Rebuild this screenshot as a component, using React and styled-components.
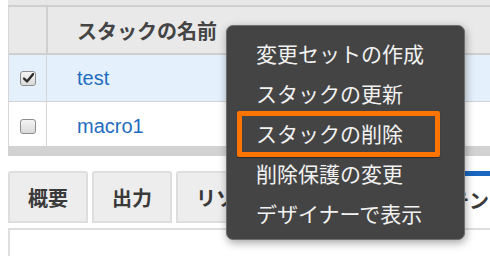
import React from "react";
import styled, { createGlobalStyle } from "styled-components";

const Global = createGlobalStyle`
  html, body { margin: 0; padding: 0; background: #fff; }
  body { font-family: "Liberation Sans", "Noto Sans CJK JP", sans-serif; }
`;

const Page = styled.div`
  position: relative;
  width: 490px;
  height: 256px;
  overflow: hidden;
  padding-left: 8px;
  box-sizing: border-box;
  background: #fff;
`;

const Wide = styled.div`
  width: 620px;
`;

const TopStrip = styled.div`
  height: 5px;
  background: #e7e7e7;
  border-bottom: 2px solid #cfcfcf;
`;

const Table = styled.div`
  border-left: 1px solid #d6d6d6;
`;

const Row = styled.div`
  display: grid;
  grid-template-columns: 37px 2px 1fr;
  height: ${(p) => p.$h}px;
  background: ${(p) => (p.$head ? "#e9e9e9" : p.$selected ? "#e4f0fc" : "#fff")};
  border-bottom: ${(p) => (p.$head ? "2px solid #cfcfcf" : "1px solid #d2d2d2")};
  box-sizing: content-box;
`;

const Divider = styled.div`
  background: ${(p) => (p.$head ? "#cfcfcf" : "#d6d6d6")};
  width: ${(p) => (p.$head ? 2 : 1)}px;
`;

const CheckCell = styled.div`
  display: flex;
  align-items: center;
  justify-content: center;
  padding-top: ${(p) => p.$shift || 0}px;
  padding-left: 1px;
`;

const Box = styled.span`
  width: 14px;
  height: 13px;
  border: 1px solid #8d8d8d;
  border-radius: 3px;
  background: linear-gradient(#f4f4f4, #dadada);
  display: flex;
  align-items: center;
  justify-content: center;
`;

const NameCell = styled.div`
  display: flex;
  align-items: center;
  padding-left: 29px;
  padding-top: ${(p) => p.$shift || 0}px;
  font-size: ${(p) => (p.$head ? 20 : 20)}px;
  font-weight: ${(p) => (p.$head ? 700 : 400)};
  color: ${(p) => (p.$head ? "#444" : "#1f6dbf")};
  font-family: ${(p) =>
    p.$head
      ? `"Noto Sans CJK JP", sans-serif`
      : `"Liberation Sans", "Noto Sans CJK JP", sans-serif`};
`;

const ScrollBar = styled.div`
  height: 9px;
  background: #d2d2d2;
`;

const Tabs = styled.div`
  display: flex;
  gap: 4px;
  margin-top: 15px;
`;

const Tab = styled.div`
  height: 48px;
  padding: 0 ${(p) => p.$pad || 18}px;
  display: flex;
  align-items: center;
  background: ${(p) => (p.$active ? "#fff" : "#ededed")};
  border: 2px solid #dedede;
  border-top: ${(p) => (p.$active ? "5px solid #1a66c0" : "2px solid #dedede")};
  border-bottom: ${(p) => (p.$active ? "none" : "2px solid #dedede")};
  border-radius: 3px 3px 0 0;
  font-family: "Noto Sans CJK JP", sans-serif;
  font-size: 20px;
  font-weight: 700;
  color: #3a3a3a;
  white-space: nowrap;
`;

const Panel = styled.div`
  margin-top: 4px;
  height: 60px;
  border: 2px solid #dedede;
  background: #fff;
`;

const Menu = styled.div`
  position: absolute;
  left: 226px;
  top: 25px;
  width: 239px;
  height: 215px;
  box-sizing: border-box;
  padding: 7px 0 0 29px;
  background: #444;
  border: 1px solid #6e6e6e;
  border-radius: 7px;
  box-shadow: 1px 3px 9px rgba(0, 0, 0, 0.35);
`;

const Item = styled.div`
  height: 40px;
  display: flex;
  align-items: center;
  font-family: "Noto Sans CJK JP", sans-serif;
  font-size: 21px;
  color: #f2f2f2;
  white-space: nowrap;
`;

const Highlight = styled.div`
  position: absolute;
  left: 10px;
  top: 85px;
  width: 203px;
  height: 46px;
  box-sizing: border-box;
  border: 5px solid #ff7300;
  border-radius: 2px;
  box-shadow: 0 1px 1px rgba(0, 0, 0, 0.4);
`;

const Check = () => (
  <svg width="11" height="10" viewBox="0 0 11 10">
    <path d="M1 5.5 L4 8.5 L10 1.2" stroke="#2b2b2b" strokeWidth="2.4" fill="none" strokeLinecap="round" strokeLinejoin="round" />
  </svg>
);

const rows = [
  { name: "test", checked: true, h: 46, shift: 0 },
  { name: "macro1", checked: false, h: 44, shift: 5 },
];

const tabs = [
  { label: "概要" },
  { label: "出力" },
  { label: "リソース" },
  { label: "イベント" },
  { label: "テンプレート", active: true, pad: 24 },
];

const menuItems = [
  "変更セットの作成",
  "スタックの更新",
  "スタックの削除",
  "削除保護の変更",
  "デザイナーで表示",
];

export default function App() {
  return (
    <Page>
      <Global />
      <Wide>
        <TopStrip />
        <Table>
          <Row $head $h={46}>
            <CheckCell />
            <Divider $head />
            <NameCell $head>スタックの名前</NameCell>
          </Row>
          {rows.map((r) => (
            <Row key={r.name} $h={r.h} $selected={r.checked}>
              <CheckCell $shift={r.shift}>
                <Box>{r.checked && <Check />}</Box>
              </CheckCell>
              <Divider />
              <NameCell $shift={r.shift}>{r.name}</NameCell>
            </Row>
          ))}
        </Table>
        <ScrollBar />
        <Tabs>
          {tabs.map((t) => (
            <Tab key={t.label} $active={t.active} $pad={t.pad}>
              {t.label}
            </Tab>
          ))}
        </Tabs>
        <Panel />
      </Wide>
      <Menu>
        {menuItems.map((m) => (
          <Item key={m}>{m}</Item>
        ))}
        <Highlight />
      </Menu>
    </Page>
  );
}
